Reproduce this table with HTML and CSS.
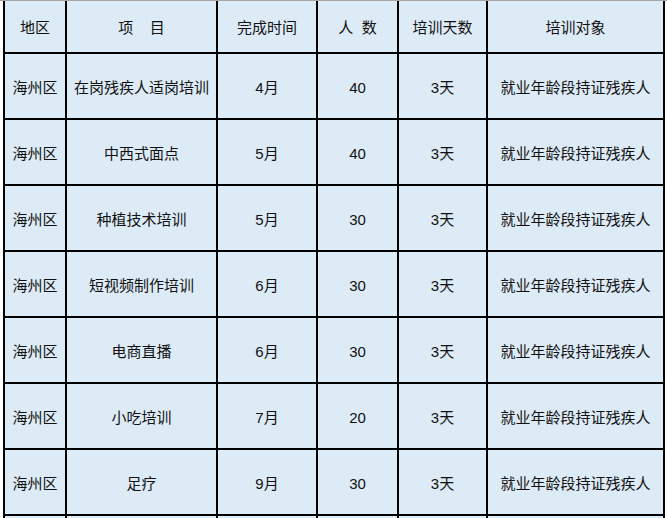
FILE: index.html
```html
<!DOCTYPE html>
<html lang="zh">
<head>
<meta charset="utf-8">
<title>培训计划</title>
<link rel="stylesheet" href="styles.css">
</head>
<body>
<div class="topline"></div>
<div class="sheet">
  <div class="cell head">地区</div>
  <div class="cell head pre">项    目</div>
  <div class="cell head">完成时间</div>
  <div class="cell head pre">人  数</div>
  <div class="cell head">培训天数</div>
  <div class="cell head">培训对象</div>

  <div class="cell">海州区</div><div class="cell">在岗残疾人适岗培训</div><div class="cell">4月</div><div class="cell">40</div><div class="cell">3天</div><div class="cell">就业年龄段持证残疾人</div>
  <div class="cell">海州区</div><div class="cell">中西式面点</div><div class="cell">5月</div><div class="cell">40</div><div class="cell">3天</div><div class="cell">就业年龄段持证残疾人</div>
  <div class="cell">海州区</div><div class="cell">种植技术培训</div><div class="cell">5月</div><div class="cell">30</div><div class="cell">3天</div><div class="cell">就业年龄段持证残疾人</div>
  <div class="cell">海州区</div><div class="cell">短视频制作培训</div><div class="cell">6月</div><div class="cell">30</div><div class="cell">3天</div><div class="cell">就业年龄段持证残疾人</div>
  <div class="cell">海州区</div><div class="cell">电商直播</div><div class="cell">6月</div><div class="cell">30</div><div class="cell">3天</div><div class="cell">就业年龄段持证残疾人</div>
  <div class="cell">海州区</div><div class="cell">小吃培训</div><div class="cell">7月</div><div class="cell">20</div><div class="cell">3天</div><div class="cell">就业年龄段持证残疾人</div>
  <div class="cell">海州区</div><div class="cell">足疗</div><div class="cell">9月</div><div class="cell">30</div><div class="cell">3天</div><div class="cell">就业年龄段持证残疾人</div>

  <div class="cell stub"></div><div class="cell stub"></div><div class="cell stub"></div><div class="cell stub"></div><div class="cell stub"></div><div class="cell stub"></div>
</div>
</body>
</html>
```

FILE: styles.css
```css
html, body {
  margin: 0;
  padding: 0;
  background: #ffffff;
  height: 518px;
  overflow: hidden;
}

body {
  font-family: "Liberation Sans", "Noto Sans CJK SC", sans-serif;
  font-size: 15px;
  color: #111111;
}

.topline {
  height: 1px;
  background: #a6a6a6;
}

.sheet {
  margin-left: 3px;
  width: 662px;
  box-sizing: border-box;
  padding: 0 2px;
  background: #000000;
  display: grid;
  grid-template-columns: 60px 149px 98px 79px 87px 175px;
  grid-template-rows: 51px repeat(7, 64px) 2px;
  column-gap: 2px;
  row-gap: 2px;
}

.cell {
  background: #ddebf7;
  display: flex;
  align-items: center;
  justify-content: center;
  text-align: center;
  line-height: 1;
  padding-top: 2px;
  box-sizing: border-box;
  white-space: nowrap;
}

.cell.stub {
  padding: 0;
}

.pre {
  white-space: pre;
}
```
